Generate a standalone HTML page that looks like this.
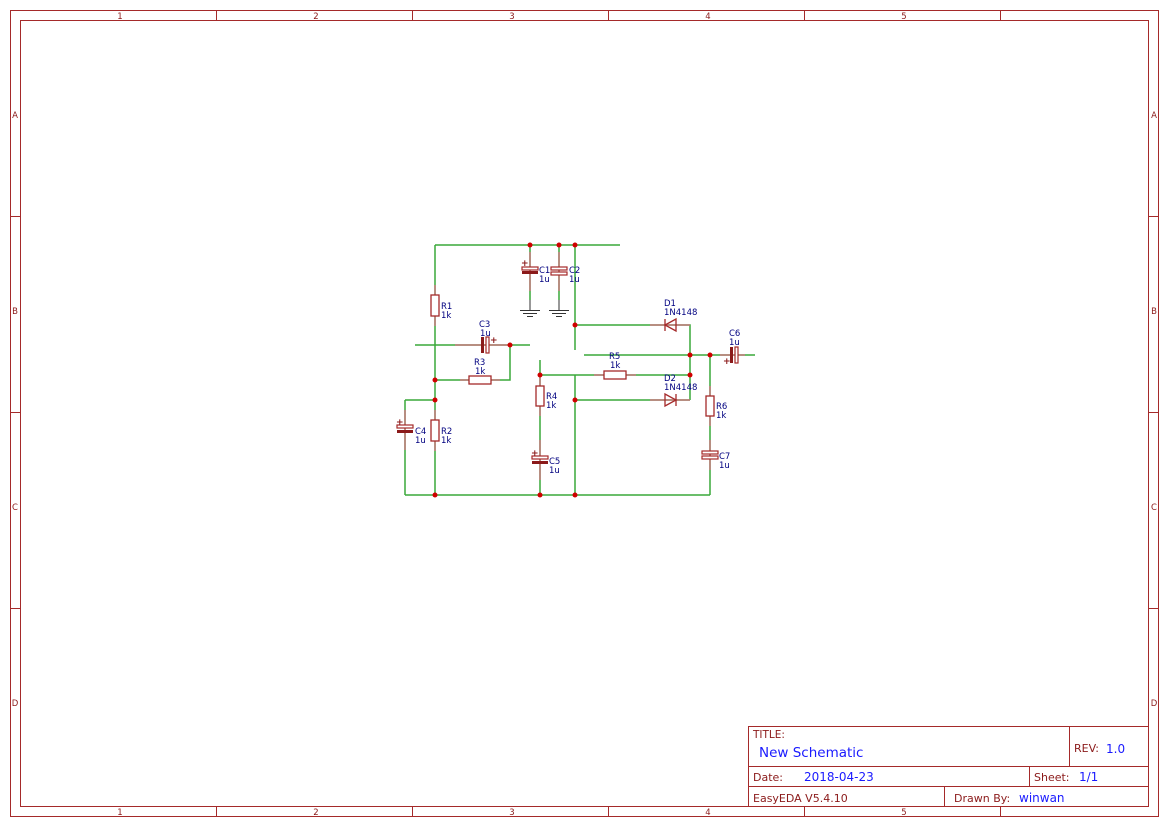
<!DOCTYPE html>
<html><head><meta charset="utf-8"><style>
html,body{margin:0;padding:0;background:#fff;width:1169px;height:827px;overflow:hidden}
svg{display:block}
text{font-family:"DejaVu Sans","Liberation Sans",sans-serif}
.b{fill:#000080;font-size:8.5px}
</style></head><body>
<svg width="1169" height="827" viewBox="0 0 1169 827" xmlns="http://www.w3.org/2000/svg">
<g fill="none" stroke="#a52a2a" stroke-width="1">
<rect x="10.5" y="10.5" width="1148" height="806"/>
<rect x="20.5" y="20.5" width="1128" height="786"/>
<path d="M216.5 10v10M412.5 10v10M608.5 10v10M804.5 10v10M1000.5 10v10M216.5 806v10M412.5 806v10M608.5 806v10M804.5 806v10M1000.5 806v10M10 216.5h10M10 412.5h10M10 608.5h10M1148 216.5h10M1148 412.5h10M1148 608.5h10"/>
</g>
<g font-size="8.5" text-anchor="middle" fill="#8b1a1a">
<text x="120" y="19">1</text><text x="316" y="19">2</text><text x="512" y="19">3</text><text x="708" y="19">4</text><text x="904" y="19">5</text>
<text x="120" y="815">1</text><text x="316" y="815">2</text><text x="512" y="815">3</text><text x="708" y="815">4</text><text x="904" y="815">5</text>
<text x="15" y="118">A</text><text x="15" y="314">B</text><text x="15" y="510">C</text><text x="15" y="706">D</text>
<text x="1154" y="118">A</text><text x="1154" y="314">B</text><text x="1154" y="510">C</text><text x="1154" y="706">D</text>
</g>
<g fill="none" stroke="#a52a2a" stroke-width="1">
<rect x="748.5" y="726.5" width="400" height="80"/>
<path d="M748 766.5h400M748 786.5h400M1069.5 726v40M1029.5 766v20M944.5 786v20"/>
</g>
<g font-size="11">
<text x="753" y="738" fill="#8b1a1a" font-size="10.5">TITLE:</text>
<text x="759" y="757" fill="#1a1aff" font-size="13.5">New Schematic</text>
<text x="1074" y="752" fill="#8b1a1a">REV:</text><text x="1106" y="753" fill="#1a1aff" font-size="12">1.0</text>
<text x="753" y="781" fill="#8b1a1a">Date:</text><text x="804" y="781" fill="#1a1aff" font-size="12">2018-04-23</text>
<text x="1034" y="781" fill="#8b1a1a">Sheet:</text><text x="1079" y="781" fill="#1a1aff" font-size="12">1/1</text>
<text x="753" y="802" fill="#8b1a1a">EasyEDA V5.4.10</text>
<text x="954" y="802" fill="#8b1a1a">Drawn By:</text><text x="1019" y="802" fill="#1a1aff" font-size="12">winwan</text>
</g>
<g fill="none" stroke="#3aa83a" stroke-width="1.5">
<path d="M435 245H620M435 245V495M405 495H710M405 400H435M405 400V495M415 345H530M435 380H510V345M575 245V350M575 375V495M540 360V495M540 375H690M584 355H755M575 325H690V400M575 400H690M710 355V495M530 245V300M559 245V300"/>
</g>
<g fill="none" stroke="#c07878" stroke-width="1.5">
<path d="M435 285V326M435 410V451M540 376V416M540 440V480M405 410V450M710 386V426M710 440V470M530 252V291M559 252V291M460 380H500M594 375H636M455 345H510M650 325H690M650 400H690M720 355H745"/>
</g>
<g fill="none" stroke="#777" stroke-width="1.5"><path d="M530 300V310M559 300V310"/></g>
<g stroke="#333" stroke-width="1"><path d="M520 310.5h20M523 313.5h14M527 316.5h6M549 310.5h20M552 313.5h14M556 316.5h6"/></g>
<g fill="#fff" stroke="#a52a2a" stroke-width="1.3">
<rect x="431" y="295" width="8" height="21"/><rect x="431" y="420" width="8" height="21"/>
<rect x="536" y="386" width="8" height="20"/><rect x="706" y="396" width="8" height="20"/>
<rect x="469" y="376" width="22" height="8"/><rect x="604" y="371" width="22" height="8"/>
</g>
<g stroke="#a52a2a" stroke-width="1.2" fill="#fff">
<rect x="522" y="267" width="16" height="3"/><rect x="551" y="267" width="16" height="3"/><rect x="551" y="272" width="16" height="3"/>
<rect x="397" y="425" width="16" height="3"/><rect x="532" y="456" width="16" height="3"/>
<rect x="702" y="451" width="16" height="3"/><rect x="702" y="456" width="16" height="3"/>
<rect x="486" y="337" width="3" height="16"/><rect x="735" y="347" width="3" height="16"/>
</g>
<g fill="#8b1a1a">
<rect x="522" y="271" width="16" height="3"/><rect x="397" y="430" width="16" height="3"/><rect x="532" y="461" width="16" height="3"/>
<rect x="481" y="337" width="3" height="16"/><rect x="730" y="347" width="3" height="16"/>
</g>
<g fill="#8b1a1a" font-size="9" font-weight="bold"><text x="521" y="266">+</text><text x="396" y="425">+</text><text x="531" y="456">+</text><text x="490" y="343">+</text><text x="723" y="364">+</text></g>
<g fill="none" stroke="#a52a2a" stroke-width="1.3">
<path d="M665 319V331M676 319V331L665 325Z"/>
<path d="M676 394V406M665 394V406L676 400Z"/>
</g>
<g fill="#d00000">
<circle cx="530" cy="245" r="2.5"/><circle cx="559" cy="245" r="2.5"/><circle cx="575" cy="245" r="2.5"/>
<circle cx="510" cy="345" r="2.5"/><circle cx="435" cy="380" r="2.5"/><circle cx="435" cy="400" r="2.5"/>
<circle cx="435" cy="495" r="2.5"/><circle cx="540" cy="495" r="2.5"/><circle cx="575" cy="495" r="2.5"/>
<circle cx="575" cy="325" r="2.5"/><circle cx="575" cy="400" r="2.5"/><circle cx="540" cy="375" r="2.5"/>
<circle cx="690" cy="355" r="2.5"/><circle cx="690" cy="375" r="2.5"/><circle cx="710" cy="355" r="2.5"/>
</g>
<g class="b">
<text x="441" y="309">R1</text><text x="441" y="318">1k</text>
<text x="479" y="327">C3</text><text x="480" y="336">1u</text>
<text x="474" y="365">R3</text><text x="475" y="374">1k</text>
<text x="441" y="434">R2</text><text x="441" y="443">1k</text>
<text x="415" y="434">C4</text><text x="415" y="443">1u</text>
<text x="539" y="273">C1</text><text x="539" y="282">1u</text>
<text x="569" y="273">C2</text><text x="569" y="282">1u</text>
<text x="546" y="399">R4</text><text x="546" y="408">1k</text>
<text x="549" y="464">C5</text><text x="549" y="473">1u</text>
<text x="609" y="359">R5</text><text x="610" y="368">1k</text>
<text x="664" y="306">D1</text><text x="664" y="315">1N4148</text>
<text x="664" y="381">D2</text><text x="664" y="390">1N4148</text>
<text x="729" y="336">C6</text><text x="729" y="345">1u</text>
<text x="716" y="409">R6</text><text x="716" y="418">1k</text>
<text x="719" y="459">C7</text><text x="719" y="468">1u</text>
</g>
</svg>
</body></html>
